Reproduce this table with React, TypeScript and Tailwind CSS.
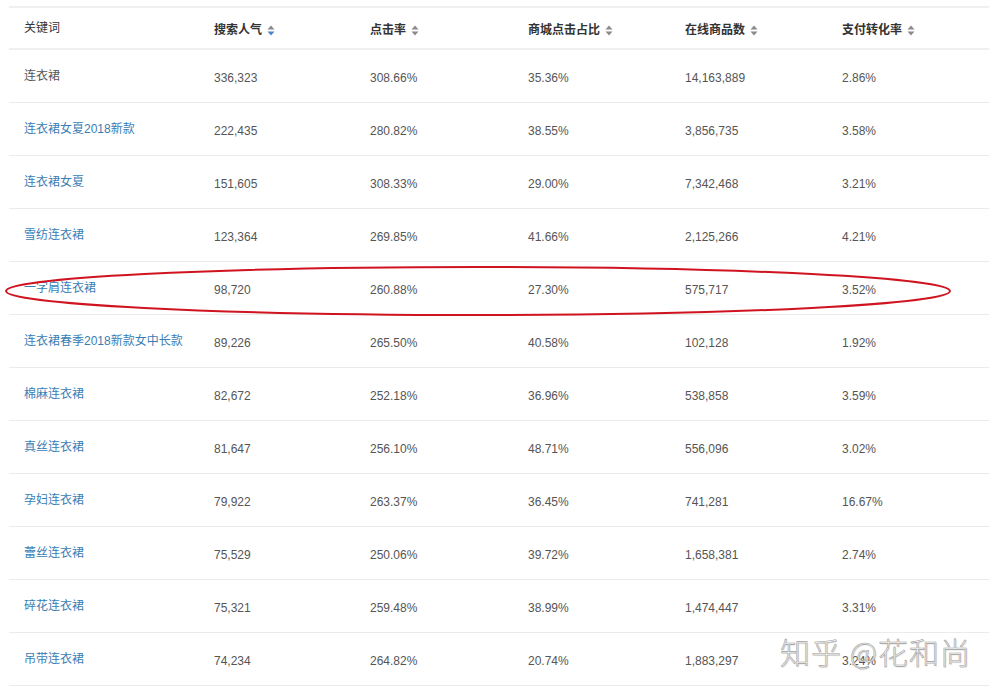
import React from "react";

type Row = {
  keyword: string;
  search: string;
  ctr: string;
  mall: string;
  items: string;
  pay: string;
  link?: boolean;
};

const rows: Row[] = [
  { keyword: "连衣裙", search: "336,323", ctr: "308.66%", mall: "35.36%", items: "14,163,889", pay: "2.86%", link: false },
  { keyword: "连衣裙女夏2018新款", search: "222,435", ctr: "280.82%", mall: "38.55%", items: "3,856,735", pay: "3.58%" },
  { keyword: "连衣裙女夏", search: "151,605", ctr: "308.33%", mall: "29.00%", items: "7,342,468", pay: "3.21%" },
  { keyword: "雪纺连衣裙", search: "123,364", ctr: "269.85%", mall: "41.66%", items: "2,125,266", pay: "4.21%" },
  { keyword: "一字肩连衣裙", search: "98,720", ctr: "260.88%", mall: "27.30%", items: "575,717", pay: "3.52%" },
  { keyword: "连衣裙春季2018新款女中长款", search: "89,226", ctr: "265.50%", mall: "40.58%", items: "102,128", pay: "1.92%" },
  { keyword: "棉麻连衣裙", search: "82,672", ctr: "252.18%", mall: "36.96%", items: "538,858", pay: "3.59%" },
  { keyword: "真丝连衣裙", search: "81,647", ctr: "256.10%", mall: "48.71%", items: "556,096", pay: "3.02%" },
  { keyword: "孕妇连衣裙", search: "79,922", ctr: "263.37%", mall: "36.45%", items: "741,281", pay: "16.67%" },
  { keyword: "蕾丝连衣裙", search: "75,529", ctr: "250.06%", mall: "39.72%", items: "1,658,381", pay: "2.74%" },
  { keyword: "碎花连衣裙", search: "75,321", ctr: "259.48%", mall: "38.99%", items: "1,474,447", pay: "3.31%" },
  { keyword: "吊带连衣裙", search: "74,234", ctr: "264.82%", mall: "20.74%", items: "1,883,297", pay: "3.24%" },
];

const SortIcon = ({ active }: { active?: boolean }) => (
  <svg width="8" height="11" viewBox="0 0 8 11" className="ml-[5px] inline-block">
    <path d="M4 0.5 L7.5 4.5 L0.5 4.5 Z" fill="#8a8a8a" />
    <path d="M4 10.5 L7.5 6.5 L0.5 6.5 Z" fill={active ? "#4a86c5" : "#8a8a8a"} />
  </svg>
);

const cols = ["w-[190px]", "w-[156px]", "w-[158px]", "w-[157px]", "w-[157px]", "flex-1"];

export default function App() {
  return (
    <div className="relative h-[693px] w-[994px] overflow-hidden bg-white font-['Liberation_Sans','Noto_Sans_CJK_SC',sans-serif] text-[12px]">
      <div className="ml-[9px] mt-[6px] w-[980px] border-t-2 border-[#f0f0f0]">
        {/* header */}
        <div className="flex h-[42px] items-center border-b-2 border-[#efefef] pl-[15px] pt-[4px] text-[#333]">
          <div className={`${cols[0]} -mt-[4px]`}>关键词</div>
          <div className={`${cols[1]} flex items-center font-bold`}>搜索人气<SortIcon active /></div>
          <div className={`${cols[2]} flex items-center font-bold`}>点击率<SortIcon /></div>
          <div className={`${cols[3]} flex items-center font-bold`}>商城点击占比<SortIcon /></div>
          <div className={`${cols[4]} flex items-center font-bold`}>在线商品数<SortIcon /></div>
          <div className={`${cols[5]} flex items-center font-bold`}>支付转化率<SortIcon /></div>
        </div>
        {rows.map((r, i) => (
          <div key={i} className="flex h-[53px] items-center border-b border-[#ebebeb] pl-[15px] pt-[3px] text-[#555]">
            <div className={`${cols[0]} -mt-[4px] ${r.link === false ? "text-[#555]" : "text-[#3a7db4]"}`}>{r.keyword}</div>
            <div className={cols[1]}>{r.search}</div>
            <div className={cols[2]}>{r.ctr}</div>
            <div className={cols[3]}>{r.mall}</div>
            <div className={cols[4]}>{r.items}</div>
            <div className={cols[5]}>{r.pay}</div>
          </div>
        ))}
      </div>

      {/* hand-drawn highlight */}
      <svg className="pointer-events-none absolute left-0 top-0" width="994" height="693">
        <ellipse cx="478" cy="291" rx="472" ry="24" fill="none" stroke="#cf1420" strokeWidth="2" />
      </svg>

      {/* watermark */}
      <div className="pointer-events-none absolute left-[780px] top-[636px] font-['Noto_Sans_CJK_SC',sans-serif] text-[30px] font-light leading-none tracking-[1px] text-[#f7f7f7] [-webkit-text-stroke:0.6px_#a0a0a0] [text-shadow:1px_1px_1px_rgba(0,0,0,0.12)]">
        知乎 @花和尚
      </div>
    </div>
  );
}
